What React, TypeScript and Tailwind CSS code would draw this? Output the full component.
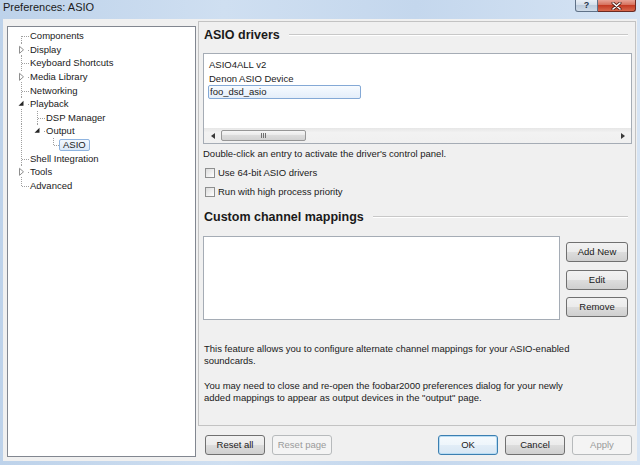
import React from "react";

type Row = {
  label: string;
  depth: number;
  exp?: "open" | "closed";
  anc: boolean[];
  first?: boolean;
  last?: boolean;
  selected?: boolean;
};

const rows: Row[] = [
  { label: "Components", depth: 0, anc: [], first: true },
  { label: "Display", depth: 0, anc: [], exp: "closed" },
  { label: "Keyboard Shortcuts", depth: 0, anc: [] },
  { label: "Media Library", depth: 0, anc: [], exp: "closed" },
  { label: "Networking", depth: 0, anc: [] },
  { label: "Playback", depth: 0, anc: [], exp: "open" },
  { label: "DSP Manager", depth: 1, anc: [true] },
  { label: "Output", depth: 1, anc: [true], exp: "open", last: true },
  { label: "ASIO", depth: 2, anc: [true, false], last: true, selected: true },
  { label: "Shell Integration", depth: 0, anc: [] },
  { label: "Tools", depth: 0, anc: [], exp: "closed" },
  { label: "Advanced", depth: 0, anc: [], last: true },
];

const H = 13.64;
const C = H / 2;

function Gutter({ row }: { row: Row }) {
  const cells: React.ReactNode[] = [];
  for (let l = 0; l <= row.depth; l++) {
    const isOwn = l === row.depth;
    cells.push(
      <svg key={l} width={16} height={H} className="shrink-0 block" shapeRendering="crispEdges">
        {!isOwn && row.anc[l] && (
          <line x1={7.5} y1={0} x2={7.5} y2={H} stroke="#a0a0a0" strokeDasharray="1 1" />
        )}
        {isOwn && (
          <>
            <line
              x1={7.5}
              y1={row.first ? C : 0}
              x2={7.5}
              y2={row.last ? C : H}
              stroke="#a0a0a0"
              strokeDasharray="1 1"
            />
            <line x1={8} y1={Math.round(C) + 0.5} x2={15} y2={Math.round(C) + 0.5} stroke="#a0a0a0" strokeDasharray="1 1" />
            {row.exp && <rect x={3} y={C - 4.5} width={10} height={9} fill="#ffffff" />}
            {row.exp === "closed" && (
              <polygon
                points={`5.5,${C - 3.5} 9.5,${C} 5.5,${C + 3.5}`}
                fill="#ffffff"
                stroke="#8e8e8e"
                strokeWidth={1}
                shapeRendering="geometricPrecision"
              />
            )}
            {row.exp === "open" && (
              <polygon
                points={`9.5,${C - 3} 9.5,${C + 2} 4.5,${C + 2}`}
                fill="#262626"
                shapeRendering="geometricPrecision"
              />
            )}
          </>
        )}
      </svg>
    );
  }
  return <>{cells}</>;
}

function Btn({
  label,
  w = 60,
  disabled,
  def,
}: {
  label: string;
  w?: number;
  disabled?: boolean;
  def?: boolean;
}) {
  let cls =
    "border-[#707070] bg-[linear-gradient(#f2f2f2_0%,#ebebeb_50%,#dddddd_50%,#cfcfcf_100%)] text-[#1a1a1a]";
  if (disabled) cls = "border-[#b7babc] bg-[#f4f4f4] text-[#9a9a9a]";
  if (def)
    cls =
      "border-[#3c7fb1] bg-[linear-gradient(#f5fafd_0%,#eef5fb_50%,#e2edf7_50%,#d8e7f4_100%)] text-[#1a1a1a] shadow-[inset_0_0_0_1px_#b8dcf3]";
  return (
    <div
      className={`h-[20px] rounded-[3px] border flex items-center justify-center text-[9.5px] leading-none shrink-0 ${cls}`}
      style={{ width: w }}
    >
      {label}
    </div>
  );
}

function Heading({ text }: { text: string }) {
  return (
    <div className="flex items-center h-[14px] pl-[1px] pr-[3px]">
      <span className="text-[12.5px] font-bold text-[#1a1a1a] leading-none">{text}</span>
      <div className="flex-1 ml-[9px] h-0 border-t border-t-[#c8c8c8] border-b border-b-white" />
    </div>
  );
}

function Check({ label }: { label: string }) {
  return (
    <div className="flex items-center h-[12px]">
      <div className="ml-[2px] w-[10px] h-[10px] border border-[#8e8f8f] bg-[linear-gradient(135deg,#dcdcdc,#ffffff)] shrink-0" />
      <span className="ml-[3px] text-[9.5px] text-[#1a1a1a] leading-none">{label}</span>
    </div>
  );
}

export default function App() {
  return (
    <div className="w-[640px] h-[465px] flex flex-col overflow-hidden font-['Liberation_Sans',Arial,sans-serif] bg-[linear-gradient(90deg,#bdd2ea,#cfdff1_35%,#c4d7ed_65%,#d6e4f4)]">
      {/* Title bar */}
      <div className="h-[19px] flex items-start justify-between shrink-0">
        <div className="pl-[3px] pt-[1px] text-[11px] leading-[13px] text-[#1b1b1b]">Preferences: ASIO</div>
        <div className="flex mr-[4px]">
          <div className="w-[23px] h-[12px] border border-t-0 border-[#5f7187] rounded-bl-[3px] bg-[linear-gradient(#e9eff6,#d2dde9_50%,#bccbdc_50%,#cfdbe8)] flex items-center justify-center">
            <span className="text-[9px] font-bold leading-none text-[#23344a] -mt-[1px]">?</span>
          </div>
          <div className="w-[38px] h-[12px] border border-t-0 border-l-0 border-[#6b2a22] rounded-br-[3px] bg-[linear-gradient(#e8a497,#d46a55_50%,#c43b24_50%,#d8684c)] flex items-center justify-center">
            <svg width="11" height="8" viewBox="0 0 11 8">
              <path d="M2 1 L9 7 M9 1 L2 7" stroke="#4a1a12" strokeWidth="3" strokeLinecap="round" />
              <path d="M2 1 L9 7 M9 1 L2 7" stroke="#ffffff" strokeWidth="1.6" strokeLinecap="round" />
            </svg>
          </div>
        </div>
      </div>

      {/* Client area */}
      <div className="mx-[3px] h-[442px] bg-[#f0f0f0] flex shrink-0">
        {/* Tree */}
        <div className="ml-[4px] mt-[7px] w-[189px] h-[431px] border border-[#828790] bg-white pt-[2px] pl-[6px] shrink-0">
          {rows.map((r) => (
            <div key={r.label} className="flex items-center" style={{ height: H }}>
              <Gutter row={r} />
              <span
                className={`text-[9.5px] leading-none text-[#1a1a1a] whitespace-nowrap ${
                  r.selected
                    ? "ml-[-3px] px-[3px] h-[12px] flex items-center rounded-[2px] border border-[#8fb4e0] bg-[linear-gradient(#f3f8fe,#dae8f8)]"
                    : ""
                }`}
              >
                {r.label}
              </span>
            </div>
          ))}
        </div>

        {/* Right column */}
        <div className="ml-[2px] w-[438px] flex flex-col shrink-0">
          <div className="mt-[2px] h-[405px] border border-[#c3c3c3] px-[4px] flex flex-col">
            <div className="mt-[6px]">
              <Heading text="ASIO drivers" />
            </div>

            {/* Drivers list */}
            <div className="mt-[11px] w-[429px] h-[91px] border border-[#a5acb5] bg-white flex flex-col">
              <div className="flex-1 pt-[4px] pl-[4px]">
                {["ASIO4ALL v2", "Denon ASIO Device", "foo_dsd_asio"].map((t, i) => (
                  <div
                    key={t}
                    className={`w-[153px] h-[13.5px] flex items-center pl-[1px] text-[9.5px] leading-none text-[#1a1a1a] ${
                      i === 2
                        ? "rounded-[2px] border border-[#84a9d6] bg-[linear-gradient(#f7fbff,#e4eefa)] pl-0"
                        : ""
                    }`}
                  >
                    {t}
                  </div>
                ))}
              </div>
              <div className="h-[15px] bg-[linear-gradient(#e6e6e6,#f2f2f2_30%,#f0f0f0)] flex items-center">
                <div className="w-[17px] flex items-center justify-center">
                  <svg width="4" height="6" viewBox="0 0 4 6">
                    <polygon points="4,0 0,3 4,6" fill="#3a3a3a" />
                  </svg>
                </div>
                <div className="w-[85px] h-[11px] rounded-[2px] border border-[#979797] bg-[linear-gradient(#f6f6f6,#e9e9e9_50%,#dcdcdc_50%,#d2d2d2)] flex items-center justify-center gap-[1px]">
                  <div className="w-[1px] h-[5px] bg-[#707070]" />
                  <div className="w-[1px] h-[5px] bg-[#707070]" />
                  <div className="w-[1px] h-[5px] bg-[#707070]" />
                </div>
                <div className="flex-1" />
                <div className="w-[17px] flex items-center justify-center">
                  <svg width="4" height="6" viewBox="0 0 4 6">
                    <polygon points="0,0 4,3 0,6" fill="#3a3a3a" />
                  </svg>
                </div>
              </div>
            </div>

            <div className="mt-[4px] h-[12px] flex items-center text-[9.5px] leading-none text-[#1a1a1a]">
              Double-click an entry to activate the driver's control panel.
            </div>

            <div className="mt-[7px]">
              <Check label="Use 64-bit ASIO drivers" />
            </div>
            <div className="mt-[7px]">
              <Check label="Run with high process priority" />
            </div>

            <div className="mt-[12px]">
              <Heading text="Custom channel mappings" />
            </div>

            <div className="mt-[12px] flex">
              <div className="w-[357px] h-[84px] border border-[#a5acb5] bg-white shrink-0" />
              <div className="ml-[6px] mt-[6px] flex flex-col">
                <Btn label="Add New" w={62} />
                <div className="mt-[8px]">
                  <Btn label="Edit" w={62} />
                </div>
                <div className="mt-[7px]">
                  <Btn label="Remove" w={62} />
                </div>
              </div>
            </div>

            <div className="mt-[23px] pl-[1px] text-[9.5px] leading-[12px] text-[#1a1a1a]">
              This feature allows you to configure alternate channel mappings for your ASIO-enabled
              <br />
              soundcards.
            </div>
            <div className="mt-[13px] pl-[1px] text-[9.5px] leading-[12px] text-[#1a1a1a]">
              You may need to close and re-open the foobar2000 preferences dialog for your newly
              <br />
              added mappings to appear as output devices in the "output" page.
            </div>
          </div>

          {/* Bottom buttons */}
          <div className="mt-[9px] flex justify-between pl-[7px] pr-[4px]">
            <div className="flex gap-[7px]">
              <Btn label="Reset all" />
              <Btn label="Reset page" disabled />
            </div>
            <div className="flex gap-[7px]">
              <Btn label="OK" def />
              <Btn label="Cancel" />
              <Btn label="Apply" disabled />
            </div>
          </div>
        </div>
      </div>
    </div>
  );
}
